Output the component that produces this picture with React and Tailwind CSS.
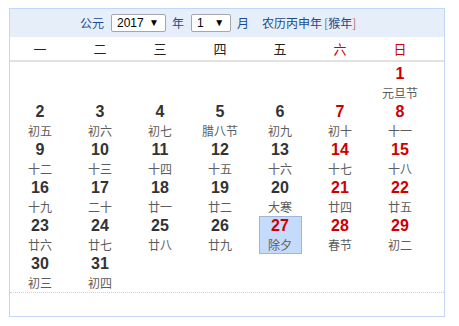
import React from "react";

const weekdays = ["一", "二", "三", "四", "五", "六", "日"];

const days = [
  null, null, null, null, null, null, { d: 1, l: "元旦节", red: true },
  { d: 2, l: "初五" }, { d: 3, l: "初六" }, { d: 4, l: "初七" }, { d: 5, l: "腊八节" }, { d: 6, l: "初九" }, { d: 7, l: "初十", red: true }, { d: 8, l: "十一", red: true },
  { d: 9, l: "十二" }, { d: 10, l: "十三" }, { d: 11, l: "十四" }, { d: 12, l: "十五" }, { d: 13, l: "十六" }, { d: 14, l: "十七", red: true }, { d: 15, l: "十八", red: true },
  { d: 16, l: "十九" }, { d: 17, l: "二十" }, { d: 18, l: "廿一" }, { d: 19, l: "廿二" }, { d: 20, l: "大寒" }, { d: 21, l: "廿四", red: true }, { d: 22, l: "廿五", red: true },
  { d: 23, l: "廿六" }, { d: 24, l: "廿七" }, { d: 25, l: "廿八" }, { d: 26, l: "廿九" }, { d: 27, l: "除夕", red: true, sel: true }, { d: 28, l: "春节", red: true }, { d: 29, l: "初二", red: true },
  { d: 30, l: "初三" }, { d: 31, l: "初四" }, null, null, null, null, null,
];

const cjk = { fontFamily: '"Noto Sans CJK SC", "Noto Sans", sans-serif' };
const num = { fontFamily: '"Liberation Sans", Arial, sans-serif' };

function Select({ value, width }) {
  return (
    <div
      className={`flex items-center h-[18px] ${width} bg-white border border-[#a6a6a6] rounded-[2px] pl-[5px] pr-[6px] justify-between text-[12px] text-black leading-none`}
      style={num}
    >
      <span>{value}</span>
      <span className="text-[10px]">▼</span>
    </div>
  );
}

export default function App() {
  return (
    <div className="pt-2 pl-[9px] bg-white h-[326px]">
      <div className="w-[436px] border border-[#c2d6f5] bg-white">
        <div className="h-[28px] bg-[#e6eefa] flex items-center pl-[70px] text-[12px] text-[#1b4c8c]" style={cjk}>
          <span>公元</span>
          <div className="ml-[7px]"><Select value="2017" width="w-[55px]" /></div>
          <span className="ml-[6px]">年</span>
          <div className="ml-[7px]"><Select value="1" width="w-[40px]" /></div>
          <span className="ml-[6px]">月</span>
          <span className="ml-[13px]">农历丙申年</span>
          <span className="ml-[2px] text-[#4a78b8]">[</span>
          <span>猴年</span>
          <span className="text-[#b07070]">]</span>
        </div>
        <div className="grid grid-cols-[repeat(7,60px)] h-[25px] items-center border-b-2 border-[#e2e2e2] text-[13px]" style={cjk}>
          {weekdays.map((w, i) => (
            <div key={w} className={`text-center ${i >= 5 ? "text-[#cc0000]" : "text-[#222]"}`}>{w}</div>
          ))}
        </div>
        <div className="grid grid-cols-[repeat(7,60px)] pt-[2px]">
          {days.map((c, i) => (
            <div key={i} className="h-[38px] flex justify-center">
              {c && (
                <div
                  className={`w-[43px] h-[38px] flex flex-col items-center ${c.sel ? "bg-[#c4dbfc] border border-[#9db6da]" : ""}`}
                >
                  <div
                    className={`text-[16px] font-bold leading-[19px] ${c.sel ? "-mt-px" : ""} ${c.red ? "text-[#cc0000]" : "text-[#333]"}`}
                    style={num}
                  >
                    {c.d}
                  </div>
                  <div className="text-[12px] leading-[19px] text-[#5c5c5c] whitespace-nowrap" style={cjk}>
                    {c.l}
                  </div>
                </div>
              )}
            </div>
          ))}
        </div>
        <div className="h-[24px] border-t border-dotted border-[#cfcfcf]"></div>
      </div>
    </div>
  );
}
